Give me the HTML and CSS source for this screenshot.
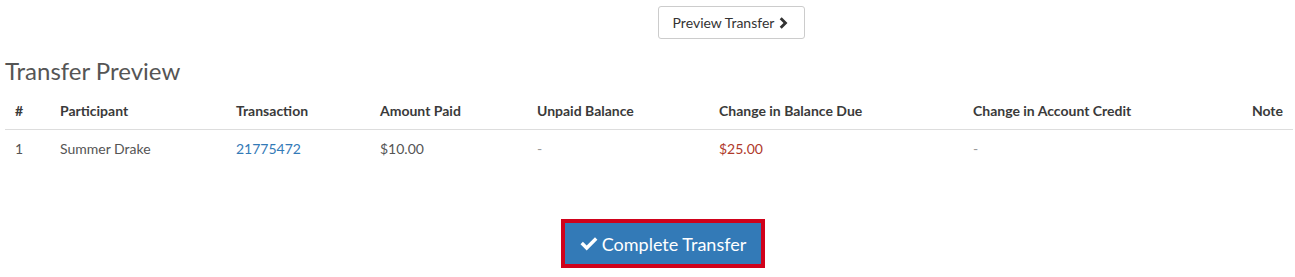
FILE: index.html
```html
<!DOCTYPE html>
<html>
<head>
<meta charset="utf-8">
<link rel="stylesheet" href="styles.css">
</head>
<body>
<div class="page">
  <div class="top-actions">
    <button class="btn-default">Preview Transfer <svg class="chev" viewBox="0 0 10 13" width="9" height="12"><path d="M0.8 2.3 L3 0.1 L9.4 6.5 L3 12.9 L0.8 10.7 L5 6.5 Z" fill="#333"/></svg></button>
  </div>
  <h3 class="title">Transfer Preview</h3>
  <table class="preview">
    <thead>
      <tr>
        <th class="c-num">#</th>
        <th class="c-part">Participant</th>
        <th class="c-trans">Transaction</th>
        <th class="c-amt">Amount Paid</th>
        <th class="c-unpaid">Unpaid Balance</th>
        <th class="c-due">Change in Balance Due</th>
        <th class="c-credit">Change in Account Credit</th>
        <th class="c-note">Note</th>
      </tr>
    </thead>
    <tbody>
      <tr>
        <td>1</td>
        <td>Summer Drake</td>
        <td><a class="link" href="#">21775472</a></td>
        <td>$10.00</td>
        <td class="muted">-</td>
        <td class="red">$25.00</td>
        <td class="muted">-</td>
        <td></td>
      </tr>
    </tbody>
  </table>
  <div class="bottom-actions">
    <div class="highlight">
      <button class="btn-primary"><svg class="check" viewBox="0 0 18 14" width="18" height="14"><path d="M0.5 7.2 L2.9 4.8 L6.7 8.6 L15 0.3 L17.4 2.7 L6.7 13.4 Z" fill="#fff"/></svg>Complete Transfer</button>
    </div>
  </div>
</div>
</body>
</html>
```

FILE: styles.css
```css
html, body { margin: 0; padding: 0; background: #fff; }
body { font-family: Lato, "Open Sans", sans-serif; color: #333; font-size: 14px; }
.page { padding: 0 2px 0 5px; }
.top-actions { display: flex; justify-content: flex-start; padding-top: 6px; padding-left: 653px; }
.btn-default {
  font-family: Lato, sans-serif; font-size: 14px; color: #333;
  background: #fff; border: 1px solid #ccc; border-radius: 3px;
  height: 33px; width: 147px; padding: 0 12px 0 10px;
  display: flex; align-items: center; justify-content: center; gap: 5px;
}
.chev { display: block; }
.title { margin: 18px 0 0 0; font-size: 24px; font-weight: 400; color: #555; line-height: 28px; }
.preview { width: 1288px; border-collapse: collapse; margin-top: 8px; }
.preview th { font-weight: 700; text-align: left; padding: 8px 10px 8px; border-bottom: 1px solid #ddd; line-height: 20px; color: #3a3a3a; }
.preview td { padding: 9px 10px; line-height: 20px; color: #555; }
.c-num { width: 25px; }
.c-part { width: 156px; }
.c-trans { width: 124px; }
.c-amt { width: 137px; }
.c-unpaid { width: 162px; }
.c-due { width: 234px; }
.c-credit { width: 250px; }
.preview th.c-note { text-align: right; }
.link { color: #337ab7; text-decoration: none; }
.preview td.red { color: #b0392b; }
.preview td.muted { color: #999; }
.bottom-actions { display: flex; justify-content: flex-start; margin-top: 51px; padding-left: 556px; }
.highlight { border: 4px solid #d0021b; }
.btn-primary {
  display: flex; align-items: center; gap: 4px;
  background: #337ab7; color: #fff; border: 0; margin: 0;
  font-family: Lato, sans-serif; font-size: 18px;
  height: 41px; width: 196px; justify-content: center; padding: 0;
}
.check { display: block; }
```
